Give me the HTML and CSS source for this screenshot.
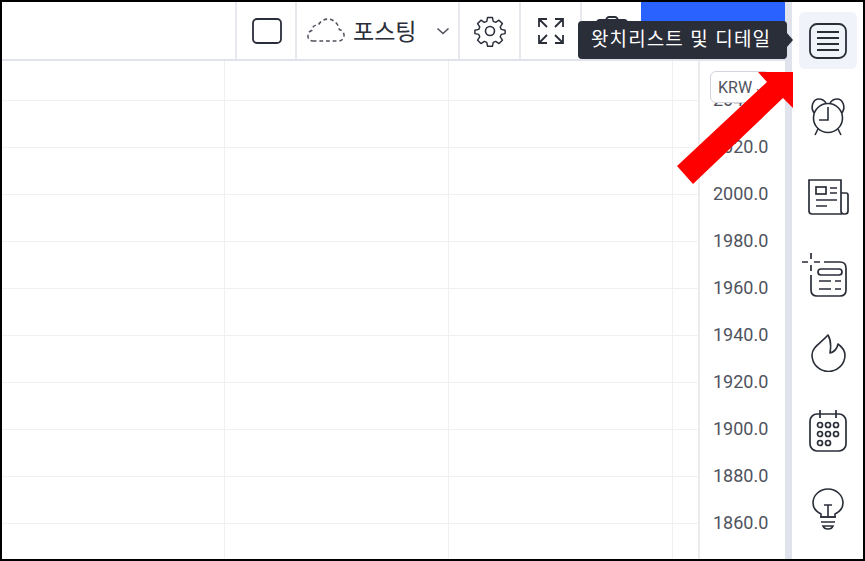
FILE: index.html
```html
<!DOCTYPE html>
<html lang="ko">
<head>
    <meta charset="UTF-8">
    <title>차트</title>
    <link rel="stylesheet" href="styles.css">
</head>
<body>

<div class="frame">
    <div class="main">
        <div class="toolbar">
            <div class="tool tool-square">
                <svg width="32" height="28" viewBox="0 0 32 28" fill="none" stroke="#2a2e39" stroke-width="1.800"><rect x="2" y="2" width="28" height="24" rx="4"/></svg>
            </div>
            <div class="tool tool-post">
                <svg width="38" height="25" viewBox="0 0 40 26" fill="none" stroke="#50535e" stroke-width="1.600" stroke-dasharray="4 3"><path d="M6 24h27c4 0 6-3 6-6s-2-5-5-6C33 6 28 1 22 1c-5 0-8 3-10 6-5 0-7 3-7 6-3 1-4 3-4 6s2 5 5 5z"/></svg>
                <span class="post-label">포스팅</span>
                <svg class="caret" width="14" height="8" viewBox="0 0 14 8" fill="none" stroke="#50535e" stroke-width="1.600"><path d="M1.500 1.500 7 6.500l5.500-5"/></svg>
            </div>
            <div class="tool tool-icon">
                <svg width="34" height="34" viewBox="0 0 34 34" fill="none" stroke="#2a2e39" stroke-width="1.600" stroke-linejoin="round"><circle cx="17" cy="17" r="4.500"/><path d="M14.300 2h5.400l.9 4.300 2.700 1.100 3.700-2.400 3.800 3.800-2.400 3.700 1.100 2.700 4.300.9v3.800l-4.300.9-1.100 2.700 2.400 3.700-3.800 3.800-3.700-2.400-2.700 1.100-.9 4.300h-5.400l-.9-4.300-2.700-1.100-3.700 2.400-3.800-3.800 2.400-3.700-1.100-2.700-4.300-.9v-3.800l4.300-.9 1.100-2.700-2.400-3.700 3.800-3.800 3.700 2.400 2.700-1.100z" transform="translate(1.700 1.700) scale(.9)"/></svg>
            </div>
            <div class="tool tool-icon">
                <svg width="28" height="28" viewBox="0 0 28 28" fill="none" stroke="#2a2e39" stroke-width="1.800"><path d="M2 10V2h8M2 2l8 8M18 2h8v8M26 2l-8 8M2 18v8h8M2 26l8-8M26 18v8h-8M26 26l-8-8"/></svg>
            </div>
            <div class="tool tool-camera">
                <svg width="32" height="32" viewBox="0 0 32 32" fill="none" stroke="#2a2e39" stroke-width="1.800"><rect x="1" y="5" width="30" height="25" rx="3"/><path d="M10 5q1-3 3-3h6q2 0 3 3"/></svg>
            </div>
            <div class="publish"></div>
        </div>

        <div class="chart">
            <div class="plot">
                <div class="plot-row row-first"></div>
                <div class="plot-row"></div>
                <div class="plot-row"></div>
                <div class="plot-row"></div>
                <div class="plot-row"></div>
                <div class="plot-row"></div>
                <div class="plot-row"></div>
                <div class="plot-row"></div>
                <div class="plot-row"></div>
                <div class="plot-row"></div>
            </div>
            <div class="axis">
                <div class="currency">KRW <span class="currency-caret">⌄</span></div>
                <div class="price">2040.0</div>
                <div class="price">2020.0</div>
                <div class="price">2000.0</div>
                <div class="price">1980.0</div>
                <div class="price">1960.0</div>
                <div class="price">1940.0</div>
                <div class="price">1920.0</div>
                <div class="price">1900.0</div>
                <div class="price">1880.0</div>
                <div class="price">1860.0</div>
            </div>
        </div>
    </div>

    <div class="strip"></div>

    <div class="sidebar">
        <div class="side-btn side-active">
            <svg width="38" height="36" viewBox="0 0 38 36" fill="none" stroke="#2a2e39" stroke-width="1.800"><rect x="1" y="1" width="36" height="34" rx="7"/><path d="M8 9h22M8 15h22M8 21h22M8 27h22"/></svg>
        </div>
        <div class="side-btn side-alarm">
            <svg width="36" height="38" viewBox="0 0 36 38" fill="none" stroke="#2a2e39" stroke-width="1.600"><circle cx="18" cy="20" r="14.500"/><path d="M18 9v13h-9"/><path d="M4 15C0 9 3 1 9 1c3 0 5 1 7 4M32 15c4-6 1-14-5-14-3 0-5 1-7 4M8 31l-3 6M28 31l3 6"/></svg>
        </div>
        <div class="side-btn">
            <svg width="42" height="38" viewBox="0 0 42 38" fill="none" stroke="#2a2e39" stroke-width="1.700"><path d="M35 36H5q-3 0-3-3V2h32v31q0 3 3 3h1q3 0 3-3V17q0-2-2-2h-5"/><rect x="9" y="9" width="10" height="7"/><path d="M23 10h7M23 15h7M9 22h21M9 28h11"/></svg>
        </div>
        <div class="side-btn">
            <svg class="spark-icon" width="46" height="44" viewBox="0 0 46 44" fill="none" stroke="#2a2e39" stroke-width="1.700"><path d="M9 0v6M9 12v6M0 9h6M12 9h6"/><path d="M22 9h16q6 0 6 6v22q0 6-6 6H15q-6 0-6-6V22"/><rect x="16" y="16" width="24" height="6" rx="3"/><path d="M17 28h12M33 28h6M17 36h12M33 36h6"/></svg>
        </div>
        <div class="side-btn">
            <svg width="35" height="38" viewBox="0 0 35 38" fill="none" stroke="#2a2e39" stroke-width="1.600" stroke-linejoin="round"><path d="M17 1C10 9 1 13 1 21a16.500 16.500 0 0 0 33 0c0-4-3-8-7-11-1 5-4 8-8 9 1-6 1-13-2-18z"/></svg>
        </div>
        <div class="side-btn">
            <svg width="38" height="42" viewBox="0 0 38 42" fill="none" stroke="#2a2e39" stroke-width="1.700"><rect x="1" y="4" width="36" height="37" rx="7"/><path d="M11 0v8M27 0v8"/><circle cx="11" cy="15" r="2.500"/><circle cx="19" cy="15" r="2.500"/><circle cx="27" cy="15" r="2.500"/><circle cx="11" cy="24" r="2.500"/><circle cx="19" cy="24" r="2.500"/><circle cx="27" cy="24" r="2.500"/><circle cx="11" cy="33" r="2.500"/><circle cx="19" cy="33" r="2.500"/></svg>
        </div>
        <div class="side-btn">
            <svg width="32" height="42" viewBox="0 0 32 42" fill="none" stroke="#2a2e39" stroke-width="1.600"><path d="M9 29v-3C5 24 1 20 1 15 1 7 8 1 16 1s15 6 15 14c0 5-4 9-8 11v3z"/><path d="M12 17h8M16 17v12M8 29h16M9 34h14M11 38h10q-1 3-5 3t-5-3z"/></svg>
        </div>
    </div>

    <div class="tooltip">왓치리스트 및 디테일<span class="tooltip-tip"></span></div>
    <svg class="red-arrow" width="116" height="112" viewBox="0 0 116 112"><path fill="#ff0000" d="M81 0h35v36L106 26 16 112 0 94 90 10z"/></svg>
</div>

</body>
</html>
```

FILE: styles.css
```css
* {
    box-sizing: border-box;
}

html, body {
    margin: 0;
    height: 100%;
}

body {
    font-family: 'Roboto', 'Noto Sans CJK KR', sans-serif;
    background: #fff;
    color: #2a2e39;
}

.frame {
    position: relative;
    display: flex;
    width: 865px;
    height: 561px;
    border: 2px solid #000;
    overflow: hidden;
}

.main {
    display: flex;
    flex-direction: column;
    width: 783px;
}

.toolbar {
    display: flex;
    justify-content: flex-end;
    height: 59px;
    border-bottom: 2px solid #e0e3eb;
}

.tool {
    display: flex;
    align-items: center;
    justify-content: center;
    border-left: 2px solid #e8e9ef;
}

.tool-square {
    width: 60px;
    padding-left: 2px;
}

.tool-post {
    width: 163px;
    justify-content: flex-start;
    padding-left: 10px;
}

.post-label {
    margin-left: 8px;
    font-family: 'Noto Sans CJK KR', sans-serif;
    font-size: 23px;
    line-height: 1;
}

.caret {
    margin-left: 20px;
}

.tool-icon {
    width: 61px;
}

.tool-camera {
    width: 61px;
}

.publish {
    width: 144px;
    background: #2962ff;
}

.chart {
    display: flex;
    flex: 1;
}

.plot {
    flex: 1;
    background-image:
        linear-gradient(#f0f0f3, #f0f0f3),
        linear-gradient(#f0f0f3, #f0f0f3),
        linear-gradient(#f0f0f3, #f0f0f3);
    background-size: 1px 100%;
    background-position: 222px 0, 446px 0, 670px 0;
    background-repeat: no-repeat;
}

.plot-row {
    height: 47px;
    border-bottom: 1px solid #f0f0f3;
}

.row-first {
    height: 40px;
}

.axis {
    width: 87px;
    border-left: 2px solid #ebebee;
    background: #fff;
    padding-top: 10px;
}

.currency {
    position: relative;
    display: flex;
    align-items: center;
    width: 60px;
    height: 32px;
    margin-left: 10px;
    padding-left: 7px;
    border: 1px solid #d1d4dc;
    border-radius: 6px;
    background: #fff;
    font-size: 16px;
    color: #50535e;
}

.currency-caret {
    margin-left: 2px;
    font-size: 13px;
}

.price {
    height: 47px;
    padding-left: 13px;
    font-size: 18px;
    line-height: 47px;
    color: #50535e;
}

.currency + .price {
    margin-top: -27px;
}

.strip {
    width: 7px;
    background: #e0e3eb;
}

.sidebar {
    display: flex;
    flex-direction: column;
    flex: 1;
    padding-top: 10px;
}

.side-btn {
    display: flex;
    align-items: center;
    justify-content: center;
    width: 58px;
    height: 57px;
    margin-left: 7px;
    margin-bottom: 21px;
    border-radius: 6px;
}

.side-active {
    background: #f0f3fa;
}

.side-alarm svg {
    margin-bottom: 3px;
}

.spark-icon {
    margin-left: -6px;
}

.tooltip {
    position: absolute;
    top: 19px;
    left: 576px;
    width: 209px;
    height: 38px;
    padding-left: 13px;
    background: #2a2e39;
    border-radius: 4px;
    font-family: 'Noto Sans CJK KR', sans-serif;
    font-size: 19px;
    line-height: 34px;
    letter-spacing: 1.100px;
    color: #fff;
    white-space: nowrap;
}

.tooltip-tip {
    position: absolute;
    top: 12px;
    right: -6px;
    border-top: 7px solid transparent;
    border-bottom: 7px solid transparent;
    border-left: 6px solid #2a2e39;
}

.red-arrow {
    position: absolute;
    top: 70px;
    left: 675px;
}
```
